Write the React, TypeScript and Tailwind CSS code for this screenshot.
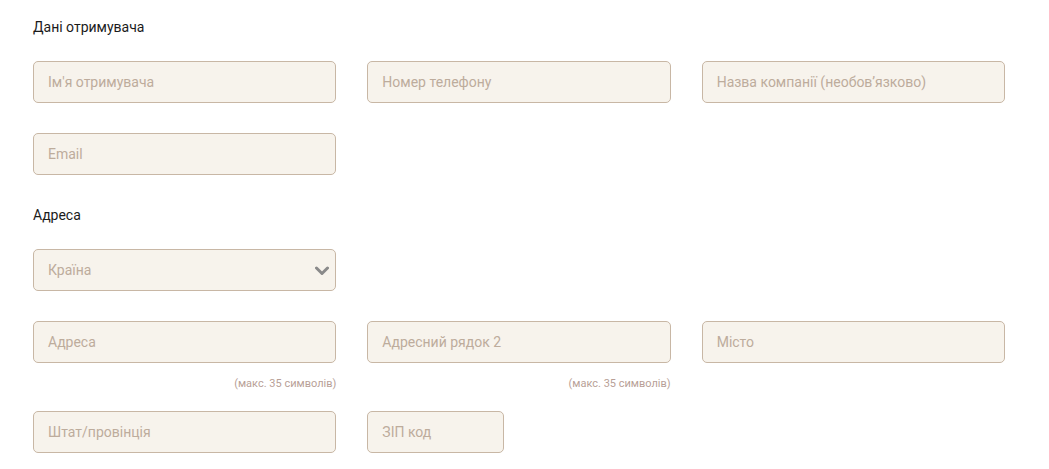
import React from "react";

const font = { fontFamily: "Roboto, 'Noto Sans', sans-serif" };

function Field({ ph, className = "" }: { ph: string; className?: string }) {
  return (
    <div
      className={`h-[42px] rounded-[5px] border border-[#c8b7a5] bg-[#f7f3ec] flex items-center pl-[14px] text-[14px] text-[#bdac9c] ${className}`}
    >
      {ph}
    </div>
  );
}

function Helper() {
  return (
    <div className="text-right text-[11px] leading-[14px] text-[#b89f97] mt-[14px]">
      (макс. 35 символів)
    </div>
  );
}

export default function App() {
  return (
    <div className="bg-white w-[1049px] h-[469px] overflow-hidden pl-[33px] pt-[17px]" style={font}>
      <div className="text-[14px] leading-[20px] text-[#1b1b1b] font-normal">Дані отримувача</div>
      <div className="mt-[24px] grid grid-cols-3 gap-x-[31px] w-[972px]">
        <Field ph="Ім'я отримувача" />
        <Field ph="Номер телефону" />
        <Field ph="Назва компанії (необов’язково)" />
      </div>
      <div className="mt-[30px] grid grid-cols-3 gap-x-[31px] w-[972px]">
        <Field ph="Email" />
      </div>
      <div className="mt-[30px] text-[14px] leading-[20px] text-[#1b1b1b] font-normal">Адреса</div>
      <div className="mt-[24px] grid grid-cols-3 gap-x-[31px] w-[972px]">
        <div className="h-[42px] rounded-[5px] border border-[#c8b7a5] bg-[#f7f3ec] flex items-center justify-between pl-[14px] pr-[6px] text-[14px] text-[#bdac9c]">
          <span>Країна</span>
          <svg width="14" height="10" viewBox="0 0 14 10" className="mt-[1px]">
            <path d="M1.5 2 L7 7.5 L12.5 2" fill="none" stroke="#8a8a8a" strokeWidth="3" strokeLinecap="round" strokeLinejoin="round" />
          </svg>
        </div>
      </div>
      <div className="mt-[30px] grid grid-cols-3 gap-x-[31px] w-[972px]">
        <div>
          <Field ph="Адреса" />
          <Helper />
        </div>
        <div>
          <Field ph="Адресний рядок 2" />
          <Helper />
        </div>
        <div>
          <Field ph="Місто" />
        </div>
      </div>
      <div className="mt-[20px] grid grid-cols-3 gap-x-[31px] w-[972px]">
        <Field ph="Штат/провінція" />
        <div>
          <Field ph="ЗІП код" className="w-[137px]" />
        </div>
      </div>
    </div>
  );
}
